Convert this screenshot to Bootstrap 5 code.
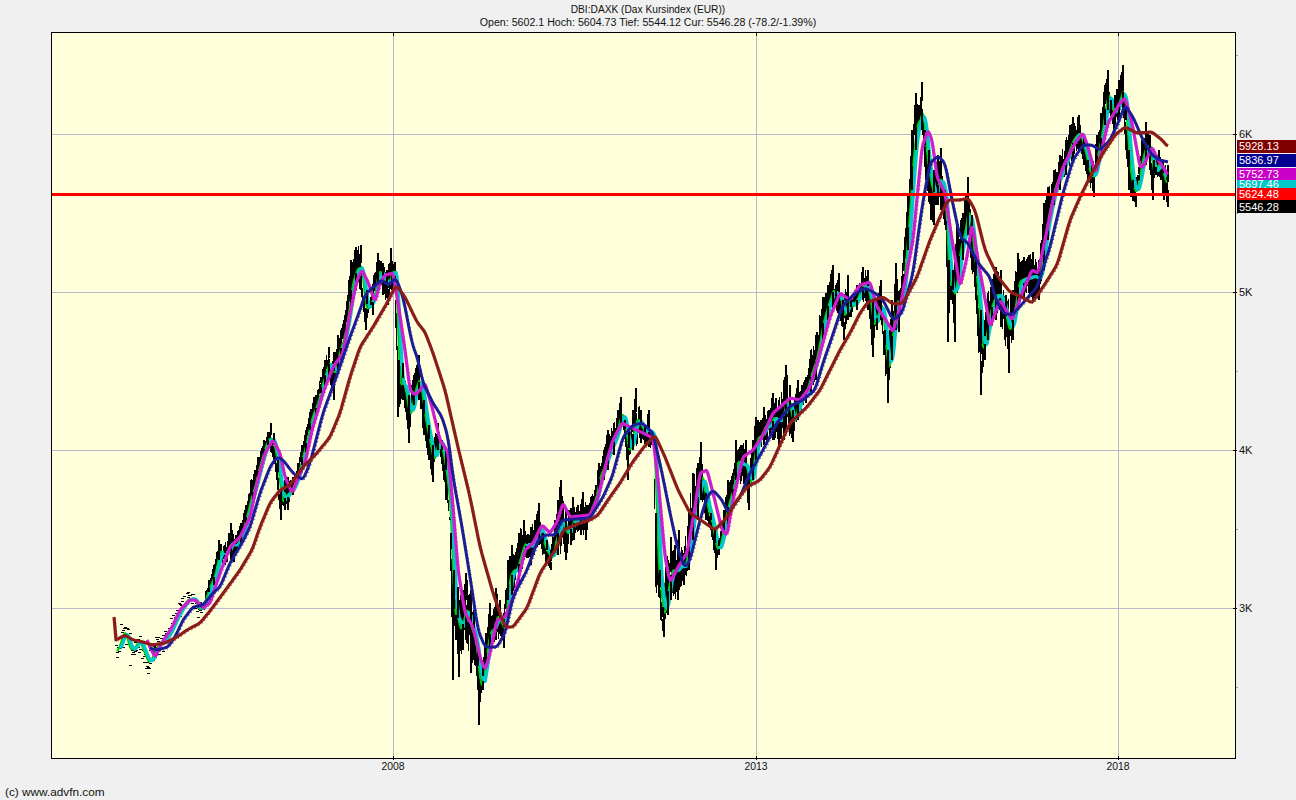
<!DOCTYPE html>
<html lang="de">
<head>
<meta charset="utf-8">
<title>DBI:DAXK</title>
<link rel="stylesheet" href="https://cdn.jsdelivr.net/npm/bootstrap@5.3.0/dist/css/bootstrap.min.css">
<style>
html, body { background: #f0f0f0; color: #000; font-family: "Liberation Sans", Arial, sans-serif; font-size: 11px; line-height: 13px; }
.page-wrap { width: 1296px; height: 800px; overflow: hidden; }
.chart-head { padding-top: 3px; height: 32px; color: #111; }
.head-one { font-size: 10.2px; }
.head-two { font-size: 10.65px; }
.chart-svg { display: block; width: 1296px; height: 752px; flex: none; }
.chart-svg text { font-family: "Liberation Sans", Arial, sans-serif; font-size: 11px; }
.chart-svg text.ax { fill: #111; }
.chart-svg text.ay { font-size: 10.4px; fill: #111; }
.chart-svg text.tag { fill: #fff; }
.chart-foot { padding-left: 5px; padding-top: 2px; font-size: 11.8px; color: #111; }
</style>
</head>
<body class="m-0">
<div class="page-wrap d-flex flex-column">
  <header class="chart-head text-center">
    <div class="head-one">DBI:DAXK (Dax Kursindex (EUR))</div>
    <div class="head-two">Open: 5602.1 Hoch: 5604.73 Tief: 5544.12 Cur: 5546.28 (-78.2/-1.39%)</div>
  </header>
  <svg class="chart-svg" id="chart" viewBox="0 32 1296 752" xmlns="http://www.w3.org/2000/svg">
    <rect x="51.5" y="32.5" width="1184" height="726" fill="#ffffdc"/>
    <g id="grid" stroke="#b8b8c8" stroke-width="1" shape-rendering="crispEdges"></g>
    <g id="plot"></g>
    <rect x="51.5" y="32.5" width="1184" height="726" fill="none" stroke="#000" shape-rendering="crispEdges"/>
    <g id="ticks" stroke="#000" shape-rendering="crispEdges"></g>
    <text class="ax" x="1239" y="138">6K</text>
    <text class="ax" x="1239" y="296">5K</text>
    <text class="ax" x="1239" y="454">4K</text>
    <text class="ax" x="1239" y="612">3K</text>
    <text class="ay" x="393" y="770" text-anchor="middle">2008</text>
    <text class="ay" x="756" y="770" text-anchor="middle">2013</text>
    <text class="ay" x="1118" y="770" text-anchor="middle">2018</text>
    <rect x="1237" y="140" width="59" height="13" fill="#800000" shape-rendering="crispEdges"/>
    <text class="tag" x="1239" y="150">5928.13</text>
    <rect x="1237" y="154" width="59" height="13" fill="#000090" shape-rendering="crispEdges"/>
    <text class="tag" x="1239" y="164">5836.97</text>
    <rect x="1237" y="178" width="59" height="12" fill="#00c8c8" shape-rendering="crispEdges"/>
    <text class="tag" x="1239" y="188">5697.46</text>
    <rect x="1237" y="168" width="59" height="12" fill="#c800c8" shape-rendering="crispEdges"/>
    <text class="tag" x="1239" y="178">5752.73</text>
    <rect x="1237" y="188" width="59" height="12" fill="#ff0000" shape-rendering="crispEdges"/>
    <text class="tag" x="1239" y="198">5624.48</text>
    <rect x="1237" y="200" width="59" height="13" fill="#000" shape-rendering="crispEdges"/>
    <text class="tag" x="1239" y="211">5546.28</text>
  </svg>
  <footer class="chart-foot">(c) www.advfn.com</footer>
</div>
<script>
const T=[[115,645],[120,622],[123,615],[128,632],[133,636],[137,628],[143,640],[147,652],[152,640],[157,632],[163,628],[167,622],[172,612],[177,602],[182,597],[187,590],[193,593],[198,600],[203,592],[208,580],[213,565],[218,540],[224,545],[230,523],[235,535],[240,523],[245,505],[250,480],[254,470],[257,457],[263,440],[267,432],[270,423],[273,433],[277,460],[280,490],[284,480],[287,477],[292,477],[297,463],[301,445],[305,430],[309,412],[313,397],[317,390],[320,377],[324,360],[328,347],[333,352],[337,335],[340,330],[345,310],[350,260],[355,247],[360,245],[363,297],[366,290],[370,297],[373,275],[377,253],[382,263],[386,270],[390,248],[394,262],[398,360],[402,363],[408,395],[413,375],[418,355],[423,400],[428,425],[432,445],[437,423],[441,440],[445,450],[450,533],[453,570],[457,587],[461,590],[465,573],[470,590],[473,610],[477,650],[482,667],[485,633],[489,603],[492,615],[495,588],[499,600],[503,613],[507,560],[511,545],[515,552],[518,533],[523,520],[526,535],[530,527],[534,520],[538,503],[542,533],[546,540],[550,550],[554,520],[557,500],[560,480],[565,510],[569,510],[572,497],[577,505],[582,492],[586,505],[590,497],[594,490],[598,463],[603,450],[607,430],[613,423],[617,410],[620,397],[624,420],[628,430],[632,410],[635,388],[640,410],[644,425],[648,410],[653,437],[655,513],[659,570],[662,607],[665,567],[670,537],[674,545],[678,530],[683,553],[688,510],[692,473],[697,463],[700,442],[705,493],[710,513],[714,530],[718,540],[723,510],[727,480],[732,473],[735,440],[740,445],[745,440],[748,473],[752,440],[755,417],[760,420],[763,407],[768,410],[772,393],[778,400],[783,380],[785,365],[789,385],[792,410],[797,380],[801,385],[805,377],[810,350],[815,335],[822,297],[827,285],[832,265],[835,285],[838,273],[842,300],[847,275],[850,300],[856,285],[862,267],[867,270],[872,300],[876,300],[880,280],[884,330],[887,350],[891,300],[895,263],[899,290],[903,250],[907,193],[911,130],[915,93],[918,105],[921,82],[924,130],[928,150],[933,170],[937,155],[940,148],[944,190],[948,260],[952,270],[956,225],[962,213],[967,177],[971,215],[975,260],[980,310],[984,320],[987,293],[991,280],[995,267],[1000,270],[1005,295],[1012,290],[1017,253],[1023,257],[1028,255],[1032,252],[1038,260],[1043,203],[1047,187],[1053,170],[1059,155],[1065,140],[1069,125],[1072,117],[1078,115],[1083,135],[1087,160],[1091,165],[1096,135],[1100,113],[1104,85],[1107,70],[1110,100],[1114,95],[1118,80],[1122,65],[1125,100],[1128,150],[1132,180],[1137,175],[1141,140],[1145,122],[1149,135],[1153,160],[1158,150],[1162,160],[1167,165]];
const B=[[115,660],[120,655],[123,645],[128,668],[133,660],[137,650],[143,670],[147,675],[152,668],[157,655],[163,650],[167,645],[172,632],[177,622],[182,612],[187,607],[193,606],[198,623],[203,610],[208,592],[213,585],[218,560],[224,565],[230,560],[233,562],[240,545],[245,525],[252,503],[257,480],[263,455],[267,445],[273,462],[277,490],[280,520],[284,510],[287,510],[292,495],[297,480],[301,465],[305,452],[309,430],[315,417],[320,393],[324,385],[328,375],[333,400],[337,370],[340,360],[345,340],[350,310],[355,290],[360,290],[365,330],[370,305],[372,315],[377,285],[382,295],[387,305],[391,290],[394,285],[397,417],[402,400],[408,443],[413,405],[418,400],[423,435],[428,460],[432,482],[437,450],[440,457],[445,500],[449,520],[452,680],[455,640],[458,677],[462,650],[465,640],[470,673],[473,660],[477,690],[478,725],[482,690],[485,665],[489,655],[495,640],[503,648],[507,600],[511,595],[518,585],[525,557],[530,565],[538,545],[545,563],[550,570],[557,555],[565,560],[570,545],[573,540],[580,535],[585,540],[590,515],[592,513],[598,490],[603,480],[607,470],[613,455],[620,425],[623,430],[627,480],[632,450],[640,443],[645,445],[648,447],[653,450],[655,587],[660,620],[663,637],[667,615],[670,600],[677,600],[683,585],[688,570],[692,540],[697,520],[700,500],[705,520],[710,530],[715,570],[718,555],[723,530],[727,525],[732,500],[735,480],[745,490],[748,510],[752,480],[755,460],[763,445],[772,440],[778,445],[783,440],[785,430],[792,442],[797,420],[805,403],[810,395],[815,380],[822,340],[827,320],[832,310],[838,315],[843,340],[847,320],[850,317],[856,310],[862,300],[867,310],[872,357],[876,330],[880,320],[887,403],[891,360],[895,330],[898,332],[903,290],[907,250],[911,190],[915,150],[921,130],[925,180],[930,220],[933,225],[937,205],[940,210],[945,230],[947,342],[950,300],[954,342],[958,280],[962,260],[967,235],[971,270],[975,300],[980,395],[984,360],[987,340],[991,325],[995,320],[1000,327],[1004,340],[1008,373],[1012,340],[1017,310],[1023,300],[1032,300],[1038,300],[1043,270],[1047,240],[1053,205],[1059,190],[1065,175],[1072,160],[1078,150],[1083,165],[1087,180],[1093,197],[1096,170],[1100,155],[1104,125],[1107,110],[1113,130],[1118,120],[1122,110],[1125,150],[1128,190],[1130,197],[1135,207],[1138,180],[1145,165],[1149,170],[1152,200],[1155,175],[1160,180],[1163,200],[1167,207]];
const M=[[147,640],[150,647],[155,657],[162,643],[172,627],[180,610],[190,600],[195,600],[203,608],[210,603],[220,573],[230,547],[240,537],[250,517],[257,483],[265,453],[273,440],[280,453],[285,477],[292,493],[297,480],[305,463],[312,430],[323,393],[333,367],[343,353],[350,313],[357,280],[362,270],[368,282],[375,302],[380,283],[385,275],[393,273],[398,303],[405,350],[410,390],[415,395],[420,390],[425,383],[432,407],[440,440],[448,452],[453,507],[458,570],[465,613],[473,627],[480,657],[485,670],[490,653],[497,620],[505,617],[515,593],[525,550],[533,543],[542,525],[550,533],[557,522],[563,503],[570,517],[590,515],[598,497],[607,460],[613,440],[622,423],[632,428],[643,433],[653,438],[658,480],[665,557],[670,582],[678,567],[687,553],[695,507],[700,473],[707,470],[713,493],[722,530],[727,535],[733,500],[743,457],[753,450],[762,437],[773,413],[780,407],[790,398],[800,400],[810,387],[820,353],[830,317],[840,293],[850,300],[860,285],[870,282],[877,307],[887,322],[893,332],[900,307],[913,240],[922,147],[928,130],[932,140],[937,177],[945,193],[952,240],[960,287],[967,257],[972,223],[978,260],[990,327],[1000,300],[1012,320],[1022,293],[1032,270],[1038,273],[1047,230],[1053,200],[1063,167],[1075,143],[1083,133],[1088,147],[1095,173],[1100,157],[1108,123],[1120,103],[1125,98],[1132,123],[1140,167],[1143,167],[1152,147],[1158,160],[1163,167],[1168,175]];
const N=[[150,648],[157,650],[168,647],[175,637],[183,620],[193,607],[203,605],[213,593],[220,587],[230,563],[242,543],[250,527],[260,493],[270,467],[277,457],[283,460],[293,473],[303,480],[310,463],[323,413],[337,375],[350,337],[360,310],[365,295],[373,287],[382,280],[388,285],[396,278],[403,297],[412,343],[418,360],[423,383],[433,403],[442,417],[448,437],[453,477],[462,527],[470,577],[478,630],[485,647],[497,647],[505,633],[513,597],[527,570],[538,540],[545,535],[555,535],[562,520],[590,518],[603,497],[612,477],[623,437],[633,425],[642,423],[653,433],[662,473],[670,513],[678,550],[685,568],[690,560],[700,520],[707,497],[713,490],[722,500],[728,513],[740,497],[750,473],[763,450],[777,423],[790,406],[803,400],[815,390],[823,363],[832,337],[842,307],[853,295],[865,288],[875,293],[883,300],[893,320],[902,313],[913,273],[922,207],[930,163],[938,156],[945,163],[952,200],[960,237],[968,243],[978,263],[990,277],[995,297],[1003,313],[1012,315],[1023,303],[1037,287],[1050,247],[1063,193],[1073,160],[1083,145],[1092,145],[1100,150],[1110,140],[1118,123],[1125,105],[1133,117],[1143,140],[1152,155],[1160,160],[1168,162]];
const R=[[114,617],[116,640],[125,635],[133,640],[143,642],[152,645],[165,643],[177,637],[187,630],[200,623],[210,611],[227,588],[240,570],[252,550],[260,527],[270,503],[280,490],[290,485],[303,467],[317,453],[330,437],[340,413],[350,377],[360,347],[373,327],[387,303],[396,285],[405,297],[417,322],[425,332],[433,353],[445,390],[457,443],[470,497],[480,547],[493,593],[505,627],[513,627],[527,608],[540,573],[557,547],[563,530],[580,523],[590,520],[598,515],[610,497],[620,483],[632,463],[643,448],[655,435],[665,457],[678,490],[690,513],[705,523],[715,530],[727,517],[737,500],[747,487],[760,480],[770,467],[780,445],[790,423],[807,407],[820,390],[830,370],[840,350],[850,333],[860,313],[868,302],[883,297],[893,304],[903,303],[917,277],[930,240],[943,210],[948,200],[960,200],[968,198],[975,210],[985,250],[998,277],[1010,292],[1022,297],[1032,303],[1043,287],[1057,265],[1060,255],[1070,220],[1080,197],[1092,173],[1103,153],[1115,135],[1125,127],[1137,133],[1152,132],[1162,140],[1168,147]];
function at(a,x){
  if(x<=a[0][0])return a[0][1];
  for(let i=1;i<a.length;i++){ if(x<=a[i][0]){const p=a[i-1],q=a[i];return p[1]+(q[1]-p[1])*(x-p[0])/(q[0]-p[0]);} }
  return a[a.length-1][1];
}
let seed=12345; function rnd(){ seed=(seed*1664525+1013904223)>>>0; return seed/4294967296; }
const svgNS="http://www.w3.org/2000/svg";
const plot=document.getElementById('plot');
function el(parent,tag,attrs){const e=document.createElementNS(svgNS,tag);for(const k in attrs)e.setAttribute(k,attrs[k]);parent.appendChild(e);return e;}
const mid=x=>(at(T,x)+at(B,x))/2;
function lag(from,to,a,b){ const pts=[]; for(let x=from;x<=to;x++){ let s=0,n=0; for(let k=a;k<=b;k++){ const u=x+k; if(u>=115&&u<=1167){s+=mid(u);n++;} } pts.push(x+','+(s/n).toFixed(1)); } return pts.join(' '); }
function line(pts,color,w,extra){ return el(plot,'polyline',Object.assign({points:pts,fill:'none',stroke:color,'stroke-width':w,'stroke-linejoin':'round'},extra||{})); }
function smooth(a,r){
  const out=[],x0=a[0][0],x1=a[a.length-1][0];
  for(let x=x0;x<=x1;x++){ const rr=x<x0+6?0:r; let s=0,n=0; for(let k=-rr;k<=rr;k++){ const u=x+k; if(u>=x0&&u<=x1){s+=at(a,u);n++;} } out.push(x+','+(s/n).toFixed(1)); }
  return out.join(' ');
}
// grid
const grid=document.getElementById('grid');
[134,292,450,608].forEach(y=>el(grid,'line',{x1:52,x2:1235,y1:y+.5,y2:y+.5}));
[393,756,1118].forEach(x=>el(grid,'line',{x1:x+.5,x2:x+.5,y1:33,y2:758}));
const ticks=document.getElementById('ticks');
[134,292,450,608].forEach(y=>el(ticks,'line',{x1:1233,x2:1237,y1:y+.5,y2:y+.5}));
[55,213,371,529,687].forEach(y=>el(ticks,'line',{x1:1236,x2:1238,y1:y+.5,y2:y+.5,stroke:'#999'}));
[393,756,1118].forEach(x=>{el(ticks,'line',{x1:x+.5,x2:x+.5,y1:756,y2:760});el(ticks,'line',{x1:x+.5,x2:x+.5,y1:33,y2:36});});
// black price bars
let d='',spikes='';
for(let x=115;x<=1167;x++){
  const t=at(T,x),b=at(B,x),h=b-t;
  if(x<205){
    const n=1+Math.floor(rnd()*2);
    for(let i=0;i<n;i++){ const y=Math.round(t+rnd()*h); d+='M'+x+' '+(y+.5)+'h3'; }
  } else {
    const f=.5+rnd()*.4, o=rnd()*(1-f);
    d+='M'+(x+.5)+' '+Math.round(t+o*h)+'V'+Math.round(t+(o+f)*h);
  }
}
T.forEach(p=>{ if(p[0]>=205) spikes+='M'+(p[0]+.5)+' '+p[1]+'v'+Math.round((mid(p[0])-p[1])*.8); });
B.forEach(p=>{ if(p[0]>=205) spikes+='M'+(p[0]+.5)+' '+p[1]+'v'+Math.round((mid(p[0])-p[1])*.8); });
el(plot,'path',{d:d,stroke:'#000','stroke-width':1.5,fill:'none','shape-rendering':'crispEdges'});
// green and cyan bands
line(lag(117,1167,-4,-1),'#00c800',2);
line(lag(120,1167,-7,-2),'#00c8c8',3.4);
el(plot,'path',{d:spikes,stroke:'#000','stroke-width':2,fill:'none','shape-rendering':'crispEdges'});
// moving averages
function ma(a,color,w,r){
  const pts=smooth(a,r);
  line(pts,color,w);
  el(plot,'polyline',{points:pts,fill:'none',stroke:color,'stroke-width':1,'stroke-dasharray':'1 3',transform:'translate(1.5 1.5)'});
}
ma(M,'#cc1ecc',3.2,1);
ma(N,'#1c1c96',3,2);
ma(R,'#8a1c1c',3.2,2);
el(plot,'rect',{x:52,y:193,width:1183,height:3,fill:'#ff0000','shape-rendering':'crispEdges'});
</script>
<script src="https://cdn.jsdelivr.net/npm/bootstrap@5.3.0/dist/js/bootstrap.bundle.min.js"></script>
</body>
</html>
